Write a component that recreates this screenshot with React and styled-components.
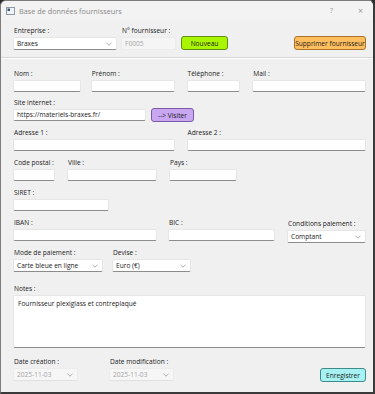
import React from "react";
import styled, { createGlobalStyle } from "styled-components";

const Global = createGlobalStyle`
  html, body { margin: 0; padding: 0; background: #2b2b2b; }
  body { font-family: "Open Sans", "Noto Sans", sans-serif; }
  * { box-sizing: border-box; }
`;

const Window = styled.div`
  width: 375px;
  height: 394px;
  background: #f0f0f0;
  border: 1px solid #7c7c7c;
  border-right: 2px solid #3a3a3a;
  border-bottom: 2px solid #3a3a3a;
  border-radius: 6px 6px 0 0;
  display: flex;
  flex-direction: column;
  font-size: 6.6px;
  color: #1a1a1a;
  overflow: hidden;
`;

const TitleBar = styled.div`
  height: 19px;
  display: flex;
  align-items: center;
  padding: 0 0 0 5px;
  background: #f3f3f3;
  color: #8a8a8a;
  font-size: 7.3px;
  gap: 4px;
`;

const TitleText = styled.span`
  flex: 1;
`;

const TitleBtn = styled.span`
  width: 25px;
  text-align: center;
  color: #9a9a9a;
  font-size: ${(p) => p.$size || 7}px;
`;

const Body = styled.div`
  padding: 7px 7px 0 12px;
  display: flex;
  flex-direction: column;
`;

const Row = styled.div`
  display: flex;
  align-items: flex-end;
  gap: ${(p) => p.$gap || 0}px;
  margin-top: ${(p) => p.$mt || 0}px;
`;

const Field = styled.div`
  display: flex;
  flex-direction: column;
  width: ${(p) => p.$w}px;
  margin-left: ${(p) => p.$ml || 0}px;
`;

const Label = styled.div`
  height: 8px;
  line-height: 8px;
  margin-bottom: 2px;
  padding-left: 1px;
  white-space: nowrap;
`;

const Input = styled.div`
  height: ${(p) => p.$h || 12}px;
  background: #ffffff;
  border: 1px solid #e6e6e6;
  border-bottom: 1px solid #8c8c8c;
  border-radius: 2px;
  line-height: 10px;
  padding: 0 3px;
  white-space: nowrap;
`;

const Disabled = styled.div`
  height: 13px;
  background: #f5f5f5;
  border: 1px solid #ececec;
  border-radius: 2px;
  color: #a6a6a6;
  line-height: 11px;
  padding: 0 3px;
`;

const Combo = styled.div`
  height: 13px;
  background: ${(p) => (p.$disabled ? "#f6f6f6" : "#ffffff")};
  color: ${(p) => (p.$disabled ? "#a6a6a6" : "#1a1a1a")};
  border: 1px solid ${(p) => (p.$disabled ? "#ececec" : "#e6e6e6")};
  border-bottom: 1px solid ${(p) => (p.$disabled ? "#e0e0e0" : "#8c8c8c")};
  border-radius: 2px;
  display: flex;
  align-items: center;
  justify-content: space-between;
  padding: 0 4px 0 3px;
  white-space: nowrap;
`;

const Chevron = () => (
  <svg width="6" height="4" viewBox="0 0 6 4">
    <path d="M0.5 0.8 L3 3.2 L5.5 0.8" fill="none" stroke="#9a9a9a" strokeWidth="0.8" />
  </svg>
);

const Button = styled.div`
  height: 14px;
  width: ${(p) => p.$w}px;
  margin-left: ${(p) => p.$ml || 0}px;
  margin-bottom: ${(p) => p.$mb || 0}px;
  background: ${(p) => p.$bg};
  border: 1px solid ${(p) => p.$bd};
  border-radius: 3px;
  display: flex;
  align-items: center;
  justify-content: center;
  white-space: nowrap;
  color: #1a1a1a;
`;

const Separator = styled.div`
  height: 2px;
  border-top: 1px solid #d6d6d6;
  border-bottom: 1px solid #ffffff;
  margin: 7px -7px 0 -12px;
`;

const Spacer = styled.div`
  flex: 1;
`;

const NotesBox = styled.div`
  height: 53px;
  background: #ffffff;
  border: 1px solid #e6e6e6;
  border-bottom: 1px solid #8c8c8c;
  border-radius: 2px;
  padding: 3px 4px;
`;

const AppIcon = () => (
  <svg width="9" height="8" viewBox="0 0 9 8">
    <rect x="0.5" y="0.5" width="8" height="7" fill="#eef3f6" stroke="#8a9aa6" />
    <rect x="1.5" y="1.5" width="2.5" height="2.5" fill="#3c5566" />
  </svg>
);

export default function App() {
  return (
    <>
      <Global />
      <Window>
        <TitleBar>
          <AppIcon />
          <TitleText>Base de données fournisseurs</TitleText>
          <TitleBtn>?</TitleBtn>
          <TitleBtn $size={9}>×</TitleBtn>
        </TitleBar>
        <Body>
          <Row>
            <Field $w={104}>
              <Label>Entreprise :</Label>
              <Combo>
                <span>Braxes</span>
                <Chevron />
              </Combo>
            </Field>
            <Field $w={55} $ml={4}>
              <Label>N° fournisseur :</Label>
              <Disabled>F0005</Disabled>
            </Field>
            <Button $w={47} $ml={5} $bg="#aaf500" $bd="#5f8c1a">Nouveau</Button>
            <Spacer />
            <Button $w={72} $bg="#ffbf5e" $bd="#a8742c">Supprimer fournisseur</Button>
          </Row>
          <Separator />
          <Row $mt={11}>
            <Field $w={68}>
              <Label>Nom :</Label>
              <Input />
            </Field>
            <Field $w={84} $ml={10}>
              <Label>Prénom :</Label>
              <Input />
            </Field>
            <Field $w={54} $ml={12}>
              <Label>Téléphone :</Label>
              <Input />
            </Field>
            <Field $w={114} $ml={12}>
              <Label>Mail :</Label>
              <Input />
            </Field>
          </Row>
          <Row $mt={7}>
            <Field $w={133}>
              <Label>Site internet :</Label>
              <Input>https://materiels-braxes.fr/</Input>
            </Field>
            <Button $w={43} $ml={5} $mb={-1} $bg="#c9a6f2" $bd="#7b5aa8">
              --&gt; Visiter
            </Button>
          </Row>
          <Row $mt={8}>
            <Field $w={162}>
              <Label>Adresse 1 :</Label>
              <Input />
            </Field>
            <Field $w={180} $ml={12}>
              <Label>Adresse 2 :</Label>
              <Input />
            </Field>
          </Row>
          <Row $mt={8}>
            <Field $w={42}>
              <Label>Code postal :</Label>
              <Input />
            </Field>
            <Field $w={90} $ml={12}>
              <Label>Ville :</Label>
              <Input />
            </Field>
            <Field $w={68} $ml={12}>
              <Label>Pays :</Label>
              <Input />
            </Field>
          </Row>
          <Row $mt={8}>
            <Field $w={96}>
              <Label>SIRET :</Label>
              <Input />
            </Field>
          </Row>
          <Row $mt={8}>
            <Field $w={144}>
              <Label>IBAN :</Label>
              <Input />
            </Field>
            <Field $w={107} $ml={11}>
              <Label>BIC :</Label>
              <Input />
            </Field>
            <Field $w={79} $ml={12} style={{ marginBottom: -2 }}>
              <Label>Conditions paiement :</Label>
              <Combo>
                <span>Comptant</span>
                <Chevron />
              </Combo>
            </Field>
          </Row>
          <Row $mt={8}>
            <Field $w={90}>
              <Label>Mode de paiement :</Label>
              <Combo>
                <span>Carte bleue en ligne</span>
                <Chevron />
              </Combo>
            </Field>
            <Field $w={79} $ml={9}>
              <Label>Devise :</Label>
              <Combo>
                <span>Euro (€)</span>
                <Chevron />
              </Combo>
            </Field>
          </Row>
          <Row $mt={13}>
            <Field $w={354}>
              <Label>Notes :</Label>
              <NotesBox>Fournisseur plexiglass et contreplaqué</NotesBox>
            </Field>
          </Row>
          <Row $mt={10}>
            <Field $w={65}>
              <Label>Date création :</Label>
              <Combo $disabled>
                <span>2025-11-03</span>
                <Chevron />
              </Combo>
            </Field>
            <Field $w={65} $ml={31}>
              <Label>Date modification :</Label>
              <Combo $disabled>
                <span>2025-11-03</span>
                <Chevron />
              </Combo>
            </Field>
            <Spacer />
            <Button $w={46} $mb={-1} $bg="#a6f2f2" $bd="#3f8a8a">Enregistrer</Button>
          </Row>
        </Body>
      </Window>
    </>
  );
}
